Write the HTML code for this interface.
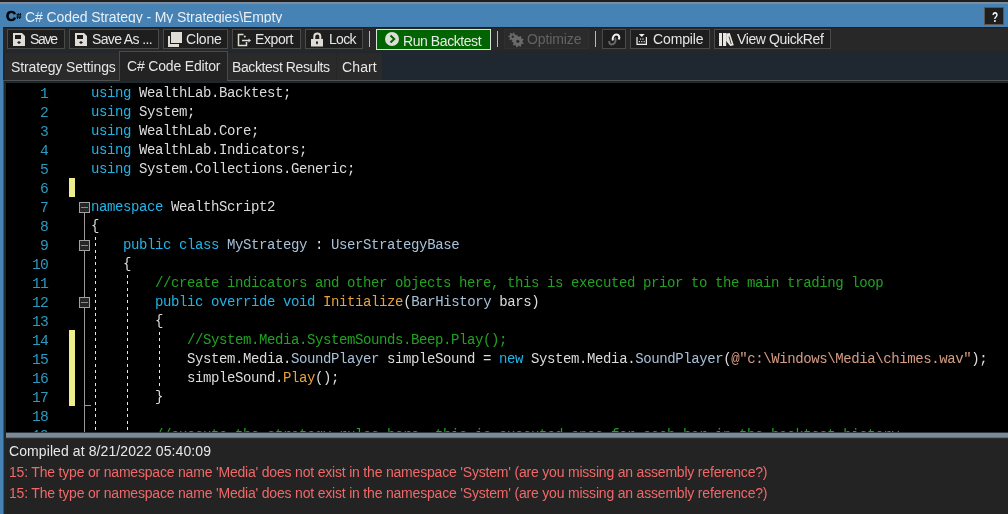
<!DOCTYPE html>
<html><head><meta charset="utf-8">
<style>
*{margin:0;padding:0;box-sizing:border-box}
html,body{width:1008px;height:514px;overflow:hidden;background:#232323}
body{position:relative;font-family:"Liberation Sans",sans-serif;color:#e6e6e6;will-change:transform}
.abs{position:absolute}
.tx{position:absolute;font-size:14px;line-height:16px;white-space:pre}
.btn{position:absolute;top:29px;height:20px;border:1px solid #4a4a4a;background:#1e1e1e}
.sep{position:absolute;top:31px;width:1px;height:16px;background:#a9bdd0}
.tab{position:absolute;top:53px;height:27px;background:#2a2a2a}
#code{left:6px;top:83px;width:1002px;height:350px;background:#000;overflow:hidden}
.ln{position:absolute;left:2px;width:40px;text-align:right;font-family:"Liberation Mono",monospace;font-size:14.67px;letter-spacing:-0.8px;line-height:19px;margin-top:2px;color:#2b9ac0}
.line{position:absolute;left:85px;margin-top:1px;height:19px;font-family:"Liberation Mono",monospace;font-size:14px;letter-spacing:-0.4px;line-height:19px;white-space:pre;color:#dcdcdc}
.k{color:#22b4e8}.t{color:#a8c0d8}.m{color:#e8a33c}.c{color:#22a222}.s{color:#d69d85}
.yb{position:absolute;left:63px;width:6px;background:#eeee8a}
.fold{position:absolute;left:73px;width:11px;height:11px;border:1px solid #a0a0a0;background:#262626}
.fold::after{content:"";position:absolute;left:1px;top:4px;width:7px;height:1px;background:#8a8a8a}
.vl{position:absolute;width:1px;background:#9a9a9a}
.dg{position:absolute;width:1px;background:repeating-linear-gradient(to bottom,#e8e8e8 0 3px,transparent 3px 6px)}
</style></head><body>
<div class="abs" style="left:0;top:0;width:1008px;height:2px;background:#1f1f1f"></div>
<div class="abs" style="left:0;top:2px;width:1008px;height:2px;background:#7d8d9d"></div>
<div class="abs" style="left:0;top:4px;width:1008px;height:23px;background:#4682b4"></div>
<div class="abs" style="left:0;top:27px;width:3px;height:487px;background:#4682b4"></div>
<div class="abs" style="left:6px;top:8px;font-size:14px;font-weight:bold;color:#000;line-height:16px;-webkit-text-stroke:0.6px #000">C</div>
<svg class="abs" style="left:0;top:0" width="30" height="27"><g stroke="#000" stroke-width="0.9" fill="none"><path d="M18.3 13L17.5 19M20.5 13L19.7 19M16.3 14.8H21.2M16.3 17.1H21.2"/></g></svg>
<div class="abs" style="left:0;top:0;width:700px;height:23px;overflow:hidden"><div class="tx" style="left:25px;top:9px;letter-spacing:-0.087px;color:#e8eef5">C# Coded Strategy - My Strategies\Empty</div></div>
<div class="abs" style="left:984px;top:7px;width:20px;height:18px;background:#1e1e1e;border:1px solid #5e5650"></div>
<div class="abs" style="left:992px;top:9px;font-size:14px;font-weight:bold;color:#f4f4f4;line-height:16px;transform:scaleX(0.72);transform-origin:0 0">?</div>
<div class="abs" style="left:3px;top:27px;width:1005px;height:24px;background:linear-gradient(#1f1f1f 0 1px,#282828 1px)"></div>
<div class="btn" style="left:7px;width:58px;"></div>
<div class="btn" style="left:69px;width:90px;"></div>
<div class="btn" style="left:163px;width:65px;"></div>
<div class="btn" style="left:232px;width:69px;"></div>
<div class="btn" style="left:305px;width:58px;"></div>
<div class="sep" style="left:369px"></div>
<div class="btn" style="left:376px;width:115px;height:21px;background:#006400;border-color:#d8e4d8"></div>
<div class="sep" style="left:497px"></div>
<div class="btn" style="left:504px;width:85px;background:#2b2b2b;border-color:#303030"></div>
<div class="sep" style="left:595px"></div>
<div class="btn" style="left:602px;width:24px;"></div>
<div class="btn" style="left:630px;width:80px;"></div>
<div class="btn" style="left:714px;width:117px;"></div>
<div class="tx" style="left:30px;top:31px;letter-spacing:-1.3px;color:#e6e6e6;font-size:14px;">Save</div>
<div class="tx" style="left:92px;top:31px;letter-spacing:-0.64px;color:#e6e6e6;font-size:14px;">Save As ...</div>
<div class="tx" style="left:186px;top:31px;letter-spacing:-0.175px;color:#e6e6e6;font-size:14px;">Clone</div>
<div class="tx" style="left:255px;top:31px;letter-spacing:-0.4px;color:#e6e6e6;font-size:14px;">Export</div>
<div class="tx" style="left:329px;top:31px;letter-spacing:-0.667px;color:#e6e6e6;font-size:14px;">Lock</div>
<div class="tx" style="left:403px;top:33px;letter-spacing:-0.427px;color:#e8ece8;font-size:14px;">Run Backtest</div>
<div class="tx" style="left:527px;top:31px;letter-spacing:-0.114px;color:#636363;font-size:14px;">Optimize</div>
<div class="tx" style="left:653px;top:31px;letter-spacing:-0.133px;color:#e6e6e6;font-size:14px;">Compile</div>
<div class="tx" style="left:737px;top:31px;letter-spacing:-0.392px;color:#e6e6e6;font-size:14px;">View QuickRef</div>
<svg class="abs" style="left:0;top:0" width="1008" height="60" viewBox="0 0 1008 60">
<g fill="#e0ddd6">
 <path d="M13 33H22L25 36V46H13Z"/><rect x="15" y="35" width="6" height="4" fill="#1c1c1c"/><path d="M19 41L21 42.5L19 44L17 42.5Z" fill="#1c1c1c"/>
 <path d="M75 33H84L87 36V46H75Z"/><rect x="77" y="35" width="6" height="4" fill="#1c1c1c"/><path d="M81 41L83 42.5L81 44L79 42.5Z" fill="#1c1c1c"/>
 <rect x="168" y="36" width="11" height="11"/><rect x="170" y="31" width="13" height="13" fill="#1c1c1c"/><rect x="171" y="32" width="11" height="11"/>
 <rect x="311" y="39" width="12" height="7.5"/>
 <circle cx="392" cy="39" r="7"/>
</g>
<g fill="none" stroke="#e0ddd6">
 <path d="M246.5 42V45.5H238.5V34.5H243.5" stroke-width="1.5"/>
 <path d="M242 40.5H249" stroke-width="1.5"/>
 <path d="M314.3 39.5V36.5A3 3 0 0 1 320.3 36.5V39.5" stroke-width="2"/>
</g>
<circle cx="244.8" cy="36.6" r="1" fill="#e0ddd6"/>
<path d="M248.5 38.5L251 40.5L248.5 42.5Z" fill="#e0ddd6"/>
<path d="M317 41.2a1 1 0 0 1 1 1L317.6 44.3H316.4L316 42.2a1 1 0 0 1 1-1Z" fill="#1c1c1c"/>
<path d="M390.5 35.5L394.2 39L390.5 42.5" fill="none" stroke="#006400" stroke-width="2"/>
<g fill="#6a6a6a"><path d="M515.64 37.30L516.62 38.47L516.13 39.30L514.63 39.00L514.07 39.37L513.76 40.87L512.80 41.00L512.10 39.64L511.46 39.43L510.10 40.13L509.40 39.46L510.03 38.07L509.79 37.44L508.40 36.80L508.49 35.85L509.97 35.46L510.31 34.89L509.94 33.40L510.74 32.87L511.96 33.79L512.63 33.70L513.55 32.49L514.47 32.78L514.51 34.31L515.00 34.77L516.53 34.74L516.87 35.64L515.70 36.63Z"/><path d="M522.38 41.76L523.58 42.93L523.21 43.90L521.53 43.99L521.01 44.59L521.18 46.26L520.27 46.77L518.93 45.76L518.14 45.89L517.20 47.27L516.17 47.08L515.80 45.44L515.11 45.03L513.50 45.49L512.84 44.68L513.61 43.19L513.34 42.43L511.82 41.75L511.83 40.70L513.37 40.05L513.66 39.30L512.93 37.80L513.61 37.00L515.21 37.50L515.91 37.11L516.32 35.49L517.35 35.32L518.26 36.72L519.05 36.87L520.40 35.89L521.30 36.43L521.09 38.09L521.60 38.71L523.27 38.83L523.61 39.82L522.39 40.96Z"/></g>
<circle cx="512.7" cy="36.7" r="1.2" fill="#2b2b2b"/><circle cx="517.8" cy="41.3" r="1.6" fill="#2b2b2b"/>
<path d="M615 37.8C616.2 40.5 615.2 43.2 613 44.2C610.8 45.2 608.8 43.8 609.2 41.2" fill="none" stroke="#6a6a6a" stroke-width="2"/>
<path d="M612.8 40.4C612 37 614.2 34.6 616.4 34.6C618.8 34.6 620.2 36.8 618.6 39.6" fill="none" stroke="#f4f4f4" stroke-width="2"/>
<path d="M637 37V44.3H646.4V37" fill="none" stroke="#f0f0f0" stroke-width="1.2"/>
<path d="M638.8 34H644.7L641.75 36.9Z" fill="#f0f0f0"/>
<g fill="#d8d8d8"><rect x="640" y="38.5" width="1.2" height="1.2"/><rect x="642.4" y="38.5" width="1.2" height="1.2"/><rect x="638.8" y="41" width="1.2" height="1.2"/><rect x="641.2" y="41" width="1.2" height="1.2"/><rect x="643.6" y="41" width="1.2" height="1.2"/></g>
<g fill="#e8e6e0"><rect x="719" y="33" width="3" height="13"/><rect x="723" y="33" width="3.2" height="13"/><path d="M726.2 33.5L729.8 33L733.8 45.2L730.2 46L726.2 41Z"/></g>
<path d="M729 36.5L731.2 44" stroke="#1c1c1c" stroke-width="0.8"/>
</svg>
<div class="abs" style="left:3px;top:51px;width:1005px;height:32px;background:#1f2830"></div>
<div class="abs" style="left:3px;top:80px;width:1005px;height:1px;background:#505050"></div>
<div class="tab" style="left:5px;width:114px"></div>
<div class="tab" style="left:228px;width:108px"></div>
<div class="tab" style="left:337px;width:45px"></div>
<div class="abs" style="left:336px;top:53px;width:1px;height:27px;background:#262626"></div>
<div class="abs" style="left:119px;top:51px;width:109px;height:30px;background:#232323;border:1px solid #4a4a4a;border-bottom:none"></div>
<div class="tx" style="left:11px;top:59px;letter-spacing:-0.112px;color:#e6e6e6;font-size:14px;">Strategy Settings</div>
<div class="tx" style="left:127px;top:58px;letter-spacing:-0.177px;color:#e6e6e6;font-size:14px;">C# Code Editor</div>
<div class="tx" style="left:232px;top:59px;letter-spacing:-0.413px;color:#e6e6e6;font-size:14px;">Backtest Results</div>
<div class="tx" style="left:342px;top:59px;letter-spacing:0.125px;color:#e6e6e6;font-size:14px;">Chart</div>
<div class="abs" style="left:3px;top:81px;width:1005px;height:2px;background:#1c2830"></div>
<div class="abs" style="left:3px;top:80px;width:1px;height:434px;background:#505050"></div>
<div class="abs" style="left:4px;top:81px;width:2px;height:433px;background:#1c2830"></div>
<div class="abs" id="code">
<div class="yb" style="top:95px;height:19px"></div>
<div class="yb" style="top:247px;height:76px"></div>
<div class="vl" style="left:78px;top:130px;height:220px"></div>
<div class="vl" style="left:78px;top:322px;width:7px;height:1px"></div>
<div class="fold" style="top:119px"></div>
<div class="fold" style="top:157px"></div>
<div class="fold" style="top:214px"></div>
<svg class="abs" style="left:0;top:0" width="200" height="350"><path d="M89 154h1v3h-1ZM89 160h1v3h-1ZM89 167h1v3h-1ZM89 173h1v3h-1ZM89 179h1v3h-1ZM89 186h1v3h-1ZM89 192h1v3h-1ZM89 198h1v3h-1ZM89 205h1v3h-1ZM89 211h1v3h-1ZM89 217h1v3h-1ZM89 224h1v3h-1ZM89 230h1v3h-1ZM89 236h1v3h-1ZM89 243h1v3h-1ZM89 249h1v3h-1ZM89 255h1v3h-1ZM89 262h1v3h-1ZM89 268h1v3h-1ZM89 274h1v3h-1ZM89 281h1v3h-1ZM89 287h1v3h-1ZM89 293h1v3h-1ZM89 300h1v3h-1ZM89 306h1v3h-1ZM89 312h1v3h-1ZM89 319h1v3h-1ZM89 325h1v3h-1ZM89 331h1v3h-1ZM89 338h1v3h-1ZM89 344h1v3h-1ZM121 192h1v3h-1ZM121 198h1v3h-1ZM121 205h1v3h-1ZM121 211h1v3h-1ZM121 217h1v3h-1ZM121 224h1v3h-1ZM121 230h1v3h-1ZM121 236h1v3h-1ZM121 243h1v3h-1ZM121 249h1v3h-1ZM121 255h1v3h-1ZM121 262h1v3h-1ZM121 268h1v3h-1ZM121 274h1v3h-1ZM121 281h1v3h-1ZM121 287h1v3h-1ZM121 293h1v3h-1ZM121 300h1v3h-1ZM121 306h1v3h-1ZM121 312h1v3h-1ZM121 319h1v3h-1ZM121 325h1v3h-1ZM121 331h1v3h-1ZM121 338h1v3h-1ZM121 344h1v3h-1ZM153 249h1v3h-1ZM153 255h1v3h-1ZM153 262h1v3h-1ZM153 268h1v3h-1ZM153 274h1v3h-1ZM153 281h1v3h-1ZM153 287h1v3h-1ZM153 293h1v3h-1ZM153 300h1v3h-1Z" fill="#e8e8e8" shape-rendering="crispEdges"/></svg>
<div class="ln" style="top:0px">1</div>
<div class="line" style="top:0px"><span class="k">using</span> WealthLab.Backtest;</div>
<div class="ln" style="top:19px">2</div>
<div class="line" style="top:19px"><span class="k">using</span> System;</div>
<div class="ln" style="top:38px">3</div>
<div class="line" style="top:38px"><span class="k">using</span> WealthLab.Core;</div>
<div class="ln" style="top:57px">4</div>
<div class="line" style="top:57px"><span class="k">using</span> WealthLab.Indicators;</div>
<div class="ln" style="top:76px">5</div>
<div class="line" style="top:76px"><span class="k">using</span> System.Collections.Generic;</div>
<div class="ln" style="top:95px">6</div>
<div class="ln" style="top:114px">7</div>
<div class="line" style="top:114px"><span class="k">namespace</span> WealthScript2</div>
<div class="ln" style="top:133px">8</div>
<div class="line" style="top:133px">{</div>
<div class="ln" style="top:152px">9</div>
<div class="line" style="top:152px">    <span class="k">public</span> <span class="k">class</span> <span class="t">MyStrategy</span> : <span class="t">UserStrategyBase</span></div>
<div class="ln" style="top:171px">10</div>
<div class="line" style="top:171px">    {</div>
<div class="ln" style="top:190px">11</div>
<div class="line" style="top:190px">        <span class="c">//create indicators and other objects here, this is executed prior to the main trading loop</span></div>
<div class="ln" style="top:209px">12</div>
<div class="line" style="top:209px">        <span class="k">public</span> <span class="k">override</span> <span class="k">void</span> <span class="m">Initialize</span>(<span class="t">BarHistory</span> bars)</div>
<div class="ln" style="top:228px">13</div>
<div class="line" style="top:228px">        {</div>
<div class="ln" style="top:247px">14</div>
<div class="line" style="top:247px">            <span class="c">//System.Media.SystemSounds.Beep.Play();</span></div>
<div class="ln" style="top:266px">15</div>
<div class="line" style="top:266px">            System.Media.<span class="t">SoundPlayer</span> simpleSound = <span class="k">new</span> System.Media.<span class="t">SoundPlayer</span>(<span class="s">@&quot;c:\Windows\Media\chimes.wav&quot;</span>);</div>
<div class="ln" style="top:285px">16</div>
<div class="line" style="top:285px">            simpleSound.<span class="m">Play</span>();</div>
<div class="ln" style="top:304px">17</div>
<div class="line" style="top:304px">        }</div>
<div class="ln" style="top:323px">18</div>
<div class="ln" style="top:342px">19</div>
<div class="line" style="top:342px">        <span class="c">//execute the strategy rules here, this is executed once for each bar in the backtest history</span></div>
</div>
<div class="abs" style="left:6px;top:432px;width:1002px;height:7px;background:linear-gradient(to bottom,#2e353b 0 1px,#7b8a97 1px 5px,#5f6d7a 5px 6px,#302e2c 6px 7px)"></div>
<div class="abs" style="left:6px;top:439px;width:1002px;height:75px;background:#232323"></div>
<div class="tx" style="left:9px;top:443px;letter-spacing:0.093px;color:#e8e8e8;font-size:14px;">Compiled at 8/21/2022 05:40:09</div>
<div class="tx" style="left:9px;top:464px;letter-spacing:-0.194px;color:#f06868;font-size:14px;">15: The type or namespace name &#x27;Media&#x27; does not exist in the namespace &#x27;System&#x27; (are you missing an assembly reference?)</div>
<div class="tx" style="left:9px;top:485px;letter-spacing:-0.194px;color:#f06868;font-size:14px;">15: The type or namespace name &#x27;Media&#x27; does not exist in the namespace &#x27;System&#x27; (are you missing an assembly reference?)</div>
</body></html>
